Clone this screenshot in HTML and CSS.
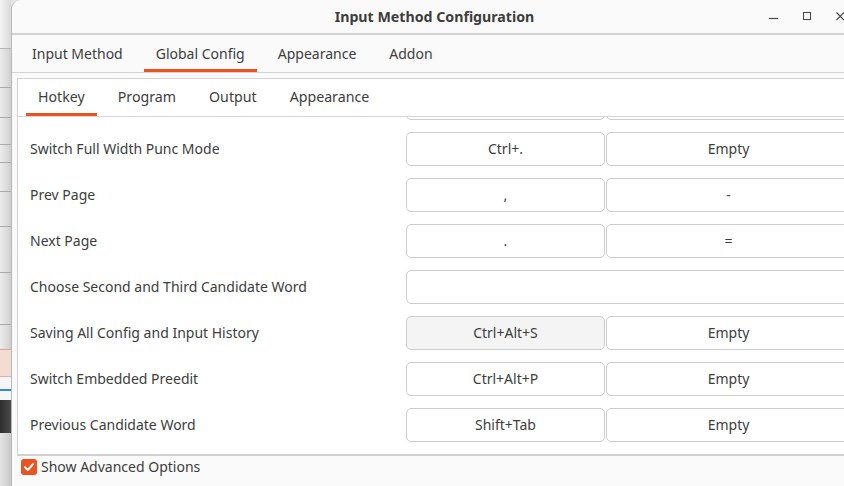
FILE: index.html
```html
<!DOCTYPE html>
<html>
<head>
<meta charset="utf-8">
<title>Input Method Configuration</title>
<link rel="stylesheet" href="styles.css">
</head>
<body>
<div class="screen">
  <div class="desk">
    <div class="band b1"></div>
    <div class="band b2"></div>
    <div class="band b3"></div>
    <div class="band b4"></div>
    <div class="band b5"></div>
    <div class="band b6"></div>
    <div class="band b7"></div>
    <div class="band b8"></div>
    <div class="band b9"></div>
    <div class="band b10"></div>
    <div class="band pink"></div>
    <div class="band white"></div>
    <div class="band blue"></div>
    <div class="band white2"></div>
    <div class="band dark"></div>
    <div class="band rest"></div>
  </div>
  <div class="window">
    <header class="titlebar">
      <div class="title">Input Method Configuration</div>
      <div class="controls">
        <span class="ctl"><svg width="24" height="24" viewBox="0 0 24 24"><path d="M7 13.5H16" stroke="#4a4a4a" stroke-width="1.2" fill="none"/></svg></span>
        <span class="ctl"><svg width="24" height="24" viewBox="0 0 24 24"><rect x="8.5" y="7.5" width="7" height="7" stroke="#4a4a4a" stroke-width="1.1" fill="none"/></svg></span>
        <span class="ctl"><svg width="24" height="24" viewBox="0 0 24 24"><path d="M8.5 7.5L16 15M16 7.5L8.5 15" stroke="#4a4a4a" stroke-width="1.2" fill="none"/></svg></span>
      </div>
    </header>
    <nav class="tabs">
      <div class="tab">Input Method</div>
      <div class="tab active">Global Config</div>
      <div class="tab">Appearance</div>
      <div class="tab">Addon</div>
    </nav>
    <main class="content">
      <section class="frame">
        <nav class="subtabs">
          <div class="tab active">Hotkey</div>
          <div class="tab">Program</div>
          <div class="tab">Output</div>
          <div class="tab">Appearance</div>
        </nav>
        <div class="scroll">
          <div class="list">
            <div class="row">
              <div class="label"></div>
              <div class="key"></div>
              <div class="key"></div>
            </div>
            <div class="row">
              <div class="label">Switch Full Width Punc Mode</div>
              <div class="key">Ctrl+.</div>
              <div class="key">Empty</div>
            </div>
            <div class="row">
              <div class="label">Prev Page</div>
              <div class="key">,</div>
              <div class="key">-</div>
            </div>
            <div class="row">
              <div class="label">Next Page</div>
              <div class="key">.</div>
              <div class="key">=</div>
            </div>
            <div class="row">
              <div class="label">Choose Second and Third Candidate Word</div>
              <div class="key wide"></div>
            </div>
            <div class="row">
              <div class="label">Saving All Config and Input History</div>
              <div class="key hover">Ctrl+Alt+S</div>
              <div class="key">Empty</div>
            </div>
            <div class="row">
              <div class="label">Switch Embedded Preedit</div>
              <div class="key">Ctrl+Alt+P</div>
              <div class="key">Empty</div>
            </div>
            <div class="row">
              <div class="label">Previous Candidate Word</div>
              <div class="key">Shift+Tab</div>
              <div class="key">Empty</div>
            </div>
            <div class="row">
              <div class="label"></div>
              <div class="key"></div>
              <div class="key"></div>
            </div>
          </div>
        </div>
      </section>
      <label class="check">
        <span class="box"><svg width="16" height="16" viewBox="0 0 16 16"><path d="M4 8.2L6.8 11L12 5.2" stroke="#fff" stroke-width="2" fill="none" stroke-linecap="round" stroke-linejoin="round"/></svg></span>
        <span class="check-text">Show Advanced Options</span>
      </label>
    </main>
  </div>
</div>
</body>
</html>
```

FILE: styles.css
```css
* { box-sizing: border-box; }
html, body { margin: 0; padding: 0; }
body {
  width: 844px;
  height: 486px;
  overflow: hidden;
  background: #e6e6e6;
  font-family: "Noto Sans", "Liberation Sans", sans-serif;
  font-size: 14px;
  color: #3d3d3d;
}
.screen {
  display: flex;
  width: 844px;
  height: 486px;
  overflow: hidden;
}

/* background desktop strip */
.desk {
  width: 11px;
  flex: none;
  display: flex;
  flex-direction: column;
  background: linear-gradient(90deg, #ececec, #d0d0d0);
}
.band { flex: none; border-bottom: 1px solid #a9a9a9; }
.b1 { height: 49px; border-bottom-color: #b5b5b5; background: linear-gradient(90deg, #f2f2f2, #dadada); }
.b2 { height: 39px; }
.b3 { height: 30px; }
.b4 { height: 27px; }
.b5 { height: 18px; }
.b6 { height: 29px; }
.b7 { height: 35px; }
.b8 { height: 46px; }
.b9 { height: 52px; }
.b10 { height: 25px; border-bottom-color: #d9a89a; }
.pink { height: 27px; background: #f3dcd4; border-bottom-color: #e0b0a2; }
.white { height: 12px; background: #f6f6f6; border-bottom: none; }
.blue { height: 2px; background: #3584e4; border-bottom: none; }
.white2 { height: 9px; background: #f6f6f6; border-bottom: none; }
.dark { height: 33px; background: linear-gradient(90deg, #2e2e2e, #4a4a4a); border-bottom: none; }
.rest { flex: 1; background: linear-gradient(90deg, #e4e4e4, #c9c9c9); border-bottom: none; }

/* window */
.window {
  flex: none;
  width: 846px;
  height: 486px;
  background: #fafafa;
  border-left: 1px solid #b8b8b8;
  border-top-left-radius: 9px;
  display: flex;
  flex-direction: column;
  overflow: hidden;
}
.titlebar {
  flex: none;
  height: 35px;
  display: grid;
  grid-template-columns: 1fr auto 1fr;
  align-items: center;
  border-bottom: 2px solid #d3d3d3;
}
.title {
  grid-column: 2;
  font-weight: 700;
  font-size: 14.2px;
  color: #3d3d3d;
}
.controls {
  grid-column: 3;
  justify-self: end;
  align-self: start;
  margin-top: 5px;
  display: flex;
  gap: 9px;
  padding-right: 5px;
}
.ctl { width: 24px; height: 24px; display: block; }
.ctl svg { display: block; }

.tabs, .subtabs {
  flex: none;
  display: flex;
  align-items: stretch;
}
.tabs {
  height: 38px;
  gap: 9px;
  padding-left: 8px;
  border-bottom: 1px solid #d3d3d3;
}
.subtabs {
  height: 38px;
  gap: 9px;
  padding-left: 8px;
  border-bottom: 1px solid #d6d6d6;
}
.tab {
  padding: 3px 12px 0;
  border-bottom: 3px solid transparent;
  display: flex;
  align-items: center;
  white-space: nowrap;
}
.subtabs .tab { padding-top: 1px; font-size: 14.2px; }
.tab.active { border-bottom-color: #e95420; }

.content {
  flex: 1;
  padding: 5px 0 0 5px;
  display: flex;
  flex-direction: column;
}
.frame {
  flex: none;
  background: #ffffff;
  border: 1px solid #d3d3d3;
  border-right: none;
  border-bottom: 2px solid #d0d0d0;
}
.scroll {
  height: 337px;
  overflow: hidden;
}
.list { margin-top: -37px; }
.row {
  height: 46px;
  display: grid;
  grid-template-columns: 375px 199px 245px;
  column-gap: 1px;
  align-items: center;
  padding-left: 12px;
}
.label { white-space: nowrap; padding-bottom: 2px; }
.key {
  height: 34px;
  border: 1px solid #cdcdcd;
  border-radius: 5px;
  background: #ffffff;
  display: flex;
  align-items: center;
  justify-content: center;
  white-space: nowrap;
  padding-bottom: 2px;
}
.key.hover { background: #f4f4f4; }
.key.wide { grid-column: 2 / 4; }

.check {
  display: flex;
  align-items: center;
  gap: 4px;
  margin: 3px 0 0 4px;
  height: 16px;
}
.check-text { margin-top: -2px; }
.box {
  width: 16px;
  height: 16px;
  border-radius: 3px;
  background: #e95420;
  display: block;
}
.box svg { display: block; }
```
